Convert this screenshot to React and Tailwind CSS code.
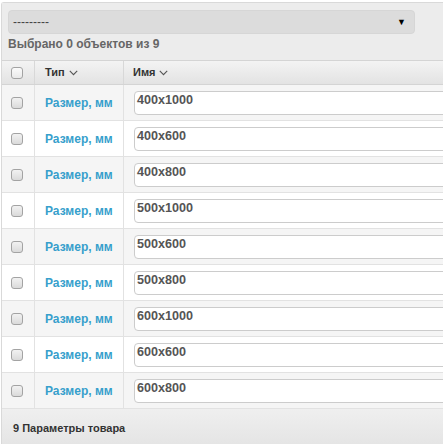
import React from "react";

const rows = ["400x1000", "400x600", "400x800", "500x1000", "500x600", "500x800", "600x1000", "600x600", "600x800"];

function Check({ header }) {
  return (
    <div
      className={
        "w-[12px] h-[12px] shrink-0 rounded-[3px] border border-[#a3a3a3] bg-gradient-to-b " +
        (header ? "from-[#fbfbfb] to-[#e9e9e9]" : "from-[#f2f2f2] to-[#dadada]")
      }
    />
  );
}

function Chevron() {
  return (
    <svg width="9" height="6" viewBox="0 0 9 6" className="ml-[4px] mt-[1px] shrink-0">
      <path d="M0.8 0.8 L4.5 4.6 L8.2 0.8" fill="none" stroke="#555" strokeWidth="1.1" />
    </svg>
  );
}

export default function App() {
  return (
    <div className="w-[443px] h-[444px] overflow-hidden bg-white pt-[2px] pl-[1px] font-['Liberation_Sans',Arial,sans-serif]">
      <div className="w-[480px] h-[442px] border-t border-l border-[#d9d9d9] rounded-tl-[3px] flex flex-col">
        {/* top area */}
        <div className="bg-[#ececec] pt-[7px] pl-[6px] pb-[8px]">
          <div className="w-[407px] h-[24px] rounded-[4px] bg-[#dcdcdc] border border-[#d6d6d6] flex items-center justify-between pl-[4px] pr-[8px]">
            <span className="text-[12px] leading-none text-[#444]">---------</span>
            <span className="text-[9px] leading-none text-black">▼</span>
          </div>
          <div className="mt-[2px] text-[12px] leading-[16px] font-bold text-[#666] whitespace-nowrap">Выбрано 0 объектов из 9</div>
        </div>
        {/* header */}
        <div className="h-[25px] shrink-0 flex border-t border-b border-[#d4d4d4] bg-gradient-to-b from-[#f3f3f3] to-[#e3e3e3]">
          <div className="w-[33px] shrink-0 border-r border-[#d8d8d8] flex items-center pl-[9px]">
            <Check header />
          </div>
          <div className="w-[89px] shrink-0 border-r border-[#d8d8d8] flex items-center pl-[10px] text-[11px] font-bold text-[#333] whitespace-nowrap">
            Тип
            <Chevron />
          </div>
          <div className="flex-1 flex items-center pl-[9px] text-[11px] font-bold text-[#333] whitespace-nowrap">
            Имя
            <Chevron />
          </div>
        </div>
        {/* rows */}
        {rows.map((r, i) => (
          <div
            key={r}
            className={"h-[36px] shrink-0 flex border-b border-[#e2e2e2] " + (i % 2 === 0 ? "bg-[#f5f5f5]" : "bg-white")}
          >
            <div className="w-[33px] shrink-0 border-r border-[#e2e2e2] flex items-center pl-[9px]">
              <Check />
            </div>
            <div className="w-[89px] shrink-0 border-r border-[#e2e2e2] flex items-center pl-[10px] text-[12px] font-bold text-[#379fcc] whitespace-nowrap">
              Размер, мм
            </div>
            <div className="flex-1 pl-[10px] pt-[6px]">
              <div className="h-[24px] w-[340px] rounded-[4px] border border-[#cccccc] bg-white pl-[2px] text-[12.6px] leading-[16px] font-bold text-[#555] whitespace-nowrap">
                {r}
              </div>
            </div>
          </div>
        ))}
        {/* footer */}
        <div className="flex-1 bg-gradient-to-b from-[#efefef] to-[#e5e5e5] pl-[11px] pt-[11px] text-[11px] leading-[16px] font-bold text-[#333] whitespace-nowrap">
          9 Параметры товара
        </div>
      </div>
    </div>
  );
}
